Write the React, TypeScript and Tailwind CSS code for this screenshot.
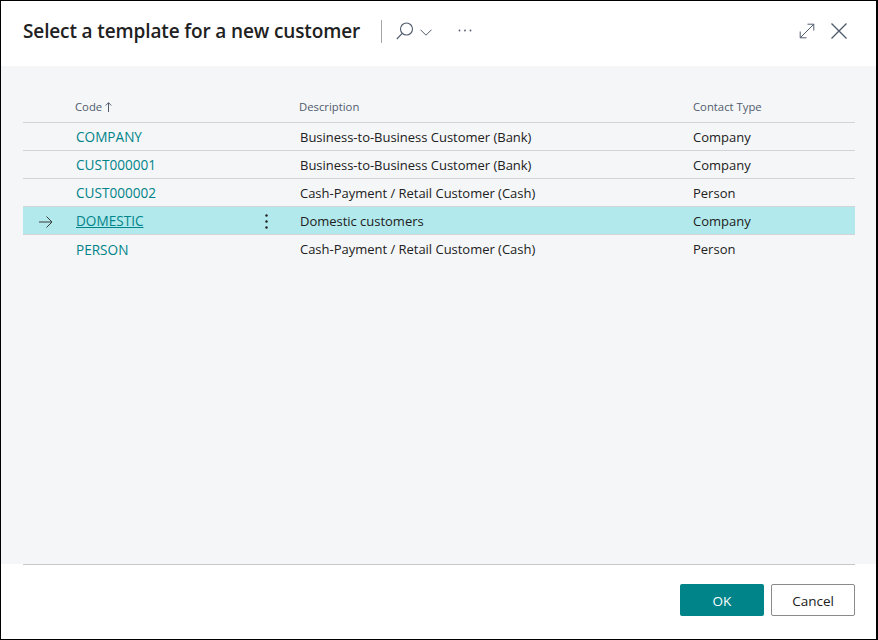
const rows = [
  { code: 'COMPANY', description: 'Business-to-Business Customer (Bank)', type: 'Company' },
  { code: 'CUST000001', description: 'Business-to-Business Customer (Bank)', type: 'Company' },
  { code: 'CUST000002', description: 'Cash-Payment / Retail Customer (Cash)', type: 'Person' },
  { code: 'DOMESTIC', description: 'Domestic customers', type: 'Company', selected: true },
  { code: 'PERSON', description: 'Cash-Payment / Retail Customer (Cash)', type: 'Person' },
];

export default function App() {
  return (
    <div className="w-[878px] h-[640px] flex flex-col bg-white border border-black border-r-2 overflow-hidden font-['Open_Sans','Noto_Sans',sans-serif] text-[13px] text-[#212121]">
      {/* Header */}
      <div className="h-[65px] shrink-0 flex items-center pl-[22px] pr-[29px] pb-[5px]">
        <h1 className="text-[19px] font-semibold text-[#212121] tracking-[-0.13px] whitespace-nowrap">Select a template for a new customer</h1>
        <div className="w-px h-[23px] bg-[#a6a6a6] ml-[21px]" />
        <svg className="w-[18px] h-[18px] ml-[14px] text-[#505c6d]" viewBox="0 0 18 18" fill="none" stroke="currentColor" strokeWidth="1.1">
          <circle cx="10.5" cy="7" r="6" />
          <path d="M6.2 11.3 L0.8 17" />
        </svg>
        <svg className="w-[12px] h-[7px] ml-[6px] mt-[3px] text-[#505c6d]" viewBox="0 0 12 7" fill="none" stroke="currentColor" strokeWidth="1">
          <path d="M0.5 0.7 L6 6.2 L11.5 0.7" />
        </svg>
        <svg className="w-[14px] h-[3px] ml-[26px] mb-[2px] text-[#505c6d]" viewBox="0 0 14 3" fill="currentColor">
          <circle cx="1.5" cy="1.5" r="0.9" />
          <circle cx="7" cy="1.5" r="0.9" />
          <circle cx="12.5" cy="1.5" r="0.9" />
        </svg>
        <div className="ml-auto flex items-center gap-[16px]">
          <svg className="w-[16px] h-[16px] text-[#505c6d]" viewBox="0 0 16 16" fill="none" stroke="currentColor" strokeWidth="1">
            <path d="M1.2 14.8 L14.8 1.2 M8.5 1.2 H14.8 V7.5 M1.2 8.5 V14.8 H7.5" />
          </svg>
          <svg className="w-[16px] h-[16px] text-[#505c6d]" viewBox="0 0 16 16" fill="none" stroke="currentColor" strokeWidth="1.4">
            <path d="M0.5 0.5 L15.5 15.5 M15.5 0.5 L0.5 15.5" />
          </svg>
        </div>
      </div>

      {/* List */}
      <div className="flex-1 bg-[#f5f6f8] pl-[22px] pr-[21px] pt-[31px]">
        <div className="h-[26px] pb-[5px] flex items-center border-b border-[#d2d4d8] text-[11.3px] text-[#505c6d]">
          <div className="w-[52px]" />
          <div className="w-[224px] flex items-center">
            Code
            <svg className="w-[7px] h-[10px] ml-[3px]" viewBox="0 0 7 10" fill="none" stroke="currentColor" strokeWidth="1">
              <path d="M3.5 10 V0.8 M0.7 3.5 L3.5 0.7 L6.3 3.5" />
            </svg>
          </div>
          <div className="w-[394px]">Description</div>
          <div>Contact Type</div>
        </div>
        {rows.map((row) => (
          <div
            key={row.code}
            className={`h-[28px] pt-[2px] flex items-center ${row.selected ? 'bg-[#b2e9ec] border-b border-[#d2d4d8]' : row.code === 'PERSON' ? '' : 'border-b border-[#d2d4d8]'}`}
          >
            <div className="w-[53px] pl-[16px]">
              {row.selected && (
                <svg className="w-[14px] h-[12px] text-[#3a3a3a]" viewBox="0 0 14 12" fill="none" stroke="currentColor" strokeWidth="1">
                  <path d="M0 6 H13 M7.5 0.5 L13 6 L7.5 11.5" />
                </svg>
              )}
            </div>
            <div className="w-[224px] flex items-center justify-between pr-[32px]">
              <span className={`text-[13.6px] text-[#008489] ${row.selected ? 'underline' : ''}`}>{row.code}</span>
              {row.selected && (
                <svg className="w-[3px] h-[15px] text-[#212121]" viewBox="0 0 3 15" fill="currentColor">
                  <circle cx="1.5" cy="1.5" r="1.2" />
                  <circle cx="1.5" cy="7.5" r="1.2" />
                  <circle cx="1.5" cy="13.5" r="1.2" />
                </svg>
              )}
            </div>
            <div className="w-[393px] tracking-[-0.02px]">{row.description}</div>
            <div>{row.type}</div>
          </div>
        ))}
      </div>

      {/* Footer */}
      <div className="h-[75px] shrink-0 pl-[22px] pr-[21px]">
        <div className="border-t border-[#c8c8c8] flex justify-end gap-[7px] pt-[19px]">
          <button className="w-[84px] h-[32px] pt-[2px] rounded-[2px] bg-[#008489] text-white text-[13.5px]">OK</button>
          <button className="w-[84px] h-[32px] pt-[2px] rounded-[2px] bg-white border border-[#8a8a8a] text-[#212121] text-[13.5px]">Cancel</button>
        </div>
      </div>
    </div>
  );
}
